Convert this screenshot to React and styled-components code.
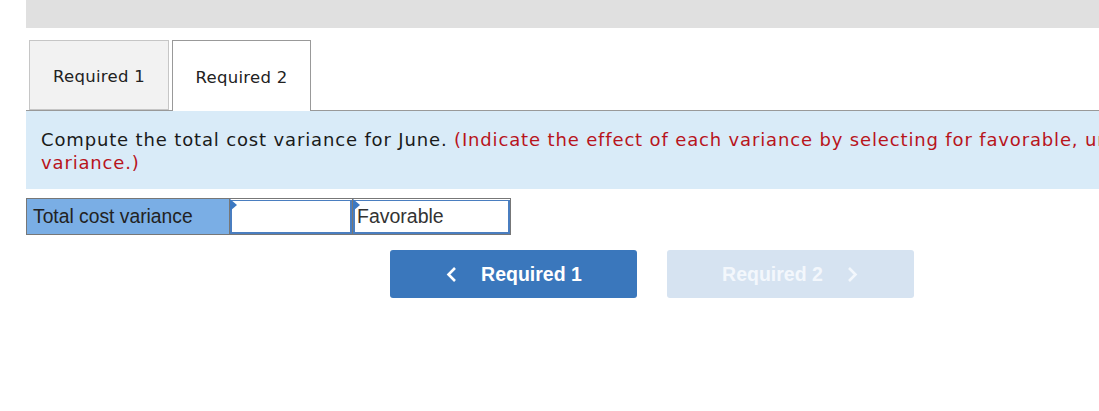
import React from "react";
import styled, { createGlobalStyle } from "styled-components";

const Global = createGlobalStyle`
  html, body { margin: 0; padding: 0; background: #fff; }
  body { width: 1099px; height: 411px; overflow: hidden; }
`;

const Page = styled.div`
  padding-left: 26px;
  width: 1099px;
  box-sizing: border-box;
  overflow: hidden;
`;

const TopBar = styled.div`
  height: 28px;
  background: #e0e0e0;
`;

const Tabs = styled.div`
  display: flex;
  align-items: flex-end;
  gap: 3px;
  margin-top: 12px;
  padding-left: 3px;
  border-bottom: 1px solid #999;
  box-sizing: border-box;
  height: 71px;
`;

const Tab = styled.div`
  box-sizing: border-box;
  height: ${(p) => (p.$active ? "71px" : "70px")};
  margin-bottom: ${(p) => (p.$active ? "-1px" : "0")};
  width: ${(p) => (p.$active ? "139px" : "140px")};
  display: flex;
  align-items: center;
  justify-content: center;
  font-family: "DejaVu Sans", sans-serif;
  font-size: 16.5px;
  letter-spacing: 0.3px;
  color: #222;
  background: ${(p) => (p.$active ? "#fff" : "#f2f2f2")};
  border: 1px solid ${(p) => (p.$active ? "#999" : "#c6c6c6")};
  border-bottom: ${(p) => (p.$active ? "none" : "1px solid #c6c6c6")};
  padding-top: 3px;
`;

const Instructions = styled.div`
  background: #d9ebf8;
  width: 1290px;
  box-sizing: border-box;
  padding: 17px 15px 0 15px;
  height: 78px;
  font-family: "DejaVu Sans", sans-serif;
  font-size: 18px;
  letter-spacing: 0.85px;
  line-height: 23px;
  color: #1a1a1a;
`;

const Red = styled.span`
  color: #b8141c;
`;

const Table = styled.div`
  margin-top: 9px;
  display: grid;
  grid-template-columns: 203px 123px 157px;
  width: 485px;
  height: 37px;
  box-sizing: border-box;
  border: 1px solid #777;
`;

const LabelCell = styled.div`
  background: #7aaee5;
  border-right: 1px solid #777;
  display: flex;
  align-items: center;
  padding-left: 6px;
  font-family: "Liberation Sans", Arial, sans-serif;
  font-size: 19.3px;
  color: #222;
`;

const InputCell = styled.div`
  position: relative;
  display: flex;
  border-right: ${(p) => (p.$last ? "none" : "1px solid #777")};
  padding: 1px 0 0 0;
`;

const Field = styled.div`
  flex: 1;
  box-sizing: border-box;
  border: 2px solid #4a7ec0;
  border-top-width: 1px;
  background: #fff;
  display: flex;
  align-items: center;
  padding-left: 2px;
  font-family: "Liberation Sans", Arial, sans-serif;
  font-size: 19.5px;
  color: #333;
`;

const Marker = styled.div`
  position: absolute;
  left: 0;
  top: 0;
  width: 0;
  height: 0;
  border-top: 6px solid transparent;
  border-bottom: 6px solid transparent;
  border-left: 7px solid #3b78c2;
`;

const Nav = styled.div`
  display: flex;
  gap: 30px;
  margin-top: 15px;
  padding-left: 364px;
`;

const NavButton = styled.button`
  width: 247px;
  height: 48px;
  border: none;
  border-radius: 3px;
  background: ${(p) => (p.$disabled ? "#d6e3f1" : "#3a77bc")};
  color: ${(p) => (p.$disabled ? "#f3f7fc" : "#fff")};
  font-family: "Liberation Sans", Arial, sans-serif;
  font-weight: bold;
  font-size: 19.5px;
  display: flex;
  align-items: center;
  justify-content: center;
  gap: 24px;
  padding: 0;
  cursor: pointer;
`;

const Chevron = ({ dir }) => (
  <svg width="12" height="17" viewBox="0 0 12 17">
    <path
      d={dir === "left" ? "M10 2 L3.5 8.5 L10 15" : "M2 2 L8.5 8.5 L2 15"}
      fill="none"
      stroke="currentColor"
      strokeWidth="2.6"
    />
  </svg>
);

export default function App() {
  return (
    <>
      <Global />
      <Page>
        <TopBar />
        <Tabs>
          <Tab>Required 1</Tab>
          <Tab $active>Required 2</Tab>
        </Tabs>
        <Instructions>
          Compute the total cost variance for June.{" "}
          <Red>
            (Indicate the effect of each variance by selecting for favorable, unfavorable, and no
            variance.)
          </Red>
        </Instructions>
        <Table>
          <LabelCell>Total cost variance</LabelCell>
          <InputCell>
            <Field />
            <Marker />
          </InputCell>
          <InputCell $last>
            <Field>Favorable</Field>
            <Marker />
          </InputCell>
        </Table>
        <Nav>
          <NavButton>
            <Chevron dir="left" />
            Required 1
          </NavButton>
          <NavButton $disabled>
            Required 2
            <Chevron dir="right" />
          </NavButton>
        </Nav>
      </Page>
    </>
  );
}
